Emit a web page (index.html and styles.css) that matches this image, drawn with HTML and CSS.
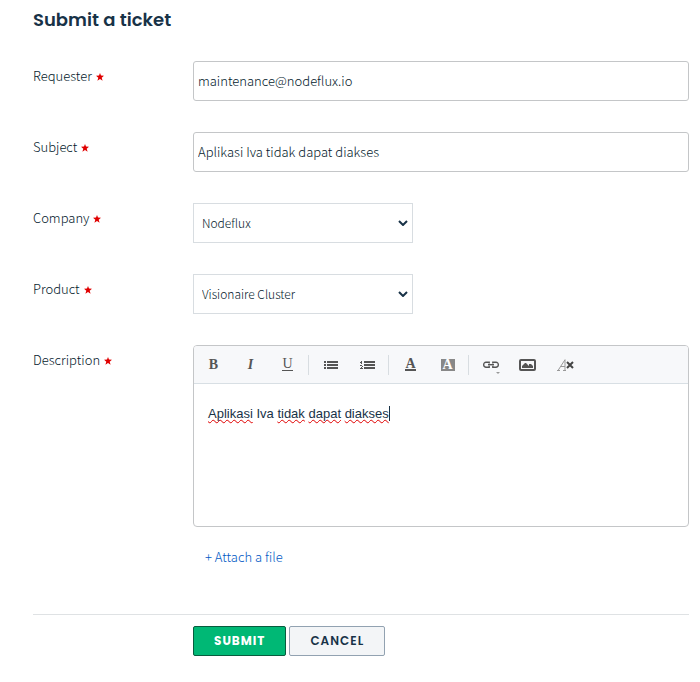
FILE: index.html
```html
<!DOCTYPE html>
<html lang="id">
<head>
<meta charset="utf-8">
<meta name="viewport" content="width=device-width, initial-scale=1">
<title>Submit a ticket</title>
<link rel="stylesheet" href="styles.css">
</head>
<body>
<main class="page">
  <h1 class="title">Submit a ticket</h1>
  <form class="form">
    <div class="row">
      <label class="label" for="requester">Requester <span class="required"><svg viewBox="0 0 8 8" aria-hidden="true"><path d="M4 0 5 2.600 8 2.800 5.700 4.700 6.600 7.800 4 6 1.400 7.800 2.300 4.700 0 2.800 3 2.600Z"/></svg></span></label>
      <input class="input" id="requester" type="text" value="maintenance@nodeflux.io">
    </div>
    <div class="row">
      <label class="label" for="subject">Subject <span class="required"><svg viewBox="0 0 8 8" aria-hidden="true"><path d="M4 0 5 2.600 8 2.800 5.700 4.700 6.600 7.800 4 6 1.400 7.800 2.300 4.700 0 2.800 3 2.600Z"/></svg></span></label>
      <input class="input" id="subject" type="text" value="Aplikasi Iva tidak dapat diakses">
    </div>
    <div class="row">
      <label class="label" for="company">Company <span class="required"><svg viewBox="0 0 8 8" aria-hidden="true"><path d="M4 0 5 2.600 8 2.800 5.700 4.700 6.600 7.800 4 6 1.400 7.800 2.300 4.700 0 2.800 3 2.600Z"/></svg></span></label>
      <div class="select-box">
        <select class="select" id="company"><option>Nodeflux</option></select>
        <svg class="chevron" viewBox="0 0 10 6" aria-hidden="true"><path d="M1 1l4 4 4-4"/></svg>
      </div>
    </div>
    <div class="row">
      <label class="label" for="product">Product <span class="required"><svg viewBox="0 0 8 8" aria-hidden="true"><path d="M4 0 5 2.600 8 2.800 5.700 4.700 6.600 7.800 4 6 1.400 7.800 2.300 4.700 0 2.800 3 2.600Z"/></svg></span></label>
      <div class="select-box">
        <select class="select" id="product"><option>Visionaire Cluster</option></select>
        <svg class="chevron" viewBox="0 0 10 6" aria-hidden="true"><path d="M1 1l4 4 4-4"/></svg>
      </div>
    </div>
    <div class="row">
      <span class="label" id="description-label">Description <span class="required"><svg viewBox="0 0 8 8" aria-hidden="true"><path d="M4 0 5 2.600 8 2.800 5.700 4.700 6.600 7.800 4 6 1.400 7.800 2.300 4.700 0 2.800 3 2.600Z"/></svg></span></span>
      <div class="field">
        <div class="editor">
          <div class="toolbar" role="toolbar" aria-label="Formatting">
            <div class="group">
              <button class="tool bold" type="button" aria-label="Bold">B</button>
              <button class="tool italic" type="button" aria-label="Italic">I</button>
              <button class="tool underline" type="button" aria-label="Underline"><span class="letter">U</span></button>
            </div>
            <div class="group">
              <button class="tool" type="button" aria-label="Bulleted list"><svg width="14" height="8" viewBox="0 0 14 8"><path d="M0 0h2v2H0zM3 0h11v2H3zM0 3h2v2H0zM3 3h11v2H3zM0 6h2v2H0zM3 6h11v2H3z"/></svg></button>
              <button class="tool" type="button" aria-label="Numbered list"><svg width="15" height="8" viewBox="0 0 15 8"><path d="M4 0h11v2H4zM4 3h11v2H4zM4 6h11v2H4zM1 0h1v3H1zM0 1h1v1H0zM0 4h2v1H0zM2 5h1v1H2zM1 6h1v1H1zM0 7h3v1H0z"/></svg></button>
            </div>
            <div class="group">
              <button class="tool color" type="button" aria-label="Text colour"><span class="letter">A</span></button>
              <button class="tool" type="button" aria-label="Background colour"><span class="swatch">A</span></button>
            </div>
            <div class="group">
              <button class="tool" type="button" aria-label="Insert link"><svg width="18" height="18" viewBox="0 0 18 18"><path class="link" d="M7.200 7.600V6.200H4a2.300 2.300 0 0 0-2.300 2.300v.4A2.300 2.300 0 0 0 4 11.200h3.200V9.800M10.800 7.600V6.200H14a2.300 2.300 0 0 1 2.300 2.300v.4a2.300 2.300 0 0 1-2.300 2.300h-3.200V9.800"/><path d="M6 8h6v1.400H6z"/><path class="faint" d="M14 16h4l-2 2z"/></svg></button>
              <button class="tool" type="button" aria-label="Insert image"><svg width="17" height="12" viewBox="0 0 17 12"><rect class="stroke" x="1" y="1" width="15" height="10" rx="1"/><path d="M3 9V7l1-1 2-2h1l3 3V5h2l2 2v2z"/></svg></button>
              <button class="tool" type="button" aria-label="Clear formatting"><svg width="18" height="12" viewBox="0 0 18 12"><path class="thin" d="M1 11.500h3M2 11.500 9 .7v10.800M5 7.500h4M7 11.500h3"/><path class="cross" d="M11 3l6 6M17 3l-6 6"/></svg></button>
            </div>
          </div>
          <div class="content" contenteditable="true" spellcheck="false" role="textbox" aria-multiline="true" aria-labelledby="description-label"><span class="misspelt">Aplikasi</span> Iva <span class="misspelt">tidak</span> <span class="misspelt">dapat</span> <span class="misspelt caret">diakses</span></div>
        </div>
        <a class="attach" href="#">+ Attach a file</a>
      </div>
    </div>
    <div class="actions">
      <button class="button submit" type="submit">SUBMIT</button>
      <button class="button cancel" type="button">CANCEL</button>
    </div>
  </form>
</main>
</body>
</html>
```
FILE: styles.css
```css
* {
  box-sizing: border-box;
}

body {
  margin: 0;
  background: #fff;
  color: #041a2c;
  font: 300 13px/20px "Source Sans Pro", "Noto Sans CJK SC", sans-serif;
}

.page {
  padding: 5px 11px 24px 33px;
}

.title {
  margin: 0 0 26px;
  color: #183247;
  font: 600 18px/30px Poppins, Inter, sans-serif;
}

.row {
  display: grid;
  grid-template-columns: 160px minmax(0, 1fr);
  margin-bottom: 31px;
}

.label {
  line-height: 30px;
}

.required {
  margin-left: 1px;
}

.required svg {
  width: 8px;
  height: 8px;
  fill: #e00000;
}

.input,
.select {
  width: 100%;
  height: 40px;
  background: #fff;
  color: inherit;
  font: inherit;
}

.input {
  padding: 0 4px 2px;
  border: 1px solid #c4c6c8;
  border-radius: 3px;
}

.select-box {
  position: relative;
  width: 220px;
  max-width: 100%;
}

.select {
  display: block;
  padding: 0 24px 0 8px;
  border: 1px solid #d8dde1;
  border-radius: 0;
  appearance: none;
  font-size: 12px;
}

.chevron {
  position: absolute;
  top: 17px;
  right: 5px;
  width: 10px;
  height: 6px;
  fill: none;
  stroke: #183247;
  stroke-width: 2;
  pointer-events: none;
}

.editor {
  border: 1px solid #c4c6c8;
  border-radius: 4px;
}

.toolbar {
  display: flex;
  flex-wrap: wrap;
  align-items: center;
  padding: 4px 1px;
  border-bottom: 1px solid #d8dfe4;
  border-radius: 3px 3px 0 0;
  background: #f7f8fa;
}

.group {
  display: flex;
}

.group + .group {
  padding-left: 6px;
  background: linear-gradient(#d8dde1, #d8dde1) 2px center / 1px 20px no-repeat;
}

.tool {
  display: flex;
  align-items: center;
  justify-content: center;
  width: 37px;
  height: 29px;
  padding: 0;
  border: 0;
  background: none;
  color: #555;
  font: 14px/14px "Liberation Serif", serif;
}

.tool svg {
  fill: #555;
}

.tool .stroke {
  fill: none;
  stroke: #555;
  stroke-width: 2;
}

.tool .link {
  fill: none;
  stroke: #555;
  stroke-width: 1.4;
}

.tool .faint {
  fill: #999;
}

.tool .thin {
  fill: none;
  stroke: #999;
}

.tool .cross {
  stroke: #444;
  stroke-width: 2;
}

.bold,
.color,
.swatch {
  font-weight: 700;
}

.italic {
  font-style: italic;
  font-weight: 700;
}

.letter {
  height: 12px;
  border-bottom: 1px solid #555;
  line-height: 10px;
}

.color .letter {
  border-bottom-width: 2px;
}

.swatch {
  width: 14px;
  height: 12px;
  background: #888;
  color: #fff;
  line-height: 12px;
}

.content {
  min-height: 142px;
  padding: 20px 14px;
  outline: 0;
  color: #183247;
  font: 13px/20px "Liberation Sans", sans-serif;
}

.misspelt {
  text-decoration: underline wavy #e00000 1px;
  text-decoration-skip-ink: none;
  text-underline-offset: 1px;
}

.caret {
  border-right: 1px solid #183247;
}

.attach {
  display: inline-block;
  margin: 20px 0 0 12px;
  color: #0058c4;
  text-decoration: none;
}

.actions {
  display: flex;
  gap: 3px;
  margin-top: 47px;
  padding: 11px 0 0 160px;
  border-top: 1px solid #dfe2e4;
}

.button {
  height: 30px;
  padding: 0 20px;
  border: 1px solid #92a2b1;
  border-radius: 2px;
  background: #f3f5f7;
  color: #183247;
  font: 600 12px/28px Poppins, Inter, sans-serif;
  letter-spacing: 1px;
}

.submit {
  border-color: #075c3e;
  background: #00b875;
  color: #fff;
  font-weight: 700;
}
```
